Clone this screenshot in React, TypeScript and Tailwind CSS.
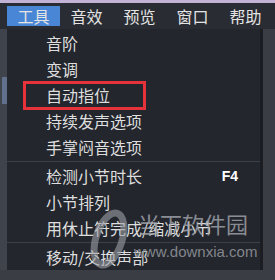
const menus = ["工具", "音效", "预览", "窗口", "帮助"];

type Item = { label: string; key?: string } | "sep";

const items: Item[] = [
  { label: "音阶" },
  { label: "变调" },
  { label: "自动指位" },
  { label: "持续发声选项" },
  { label: "手掌闷音选项" },
  "sep",
  { label: "检测小节时长", key: "F4" },
  { label: "小节排列" },
  { label: "用休止符完成/缩减小节" },
  "sep",
  { label: "移动/交换声部" },
];

export default function App() {
  return (
    <div
      className="relative w-[275px] h-[280px] overflow-hidden bg-[#3a3d44] flex flex-col"
      style={{ fontFamily: '"Noto Sans CJK SC", "Noto Sans", sans-serif' }}
    >
      <div className="h-[3px] bg-[#c2b3d6]" />
      {/* menu bar */}
      <div className="h-[26px] bg-[#292c33] flex items-center pl-[7px]">
        {menus.map((m, i) => (
          <div
            key={m}
            className={
              "w-[53px] h-[20px] flex items-center justify-center text-[16px] leading-none text-[#e4e4e4] " +
              (i === 0 ? "bg-[#4a86d6]" : "")
            }
          >
            {m}
          </div>
        ))}
      </div>

      <div className="flex h-[241px]">
        {/* left strip */}
        <div className="w-[7px] bg-[#3f434b] flex flex-col">
          <div className="h-[48px]" />
          <div className="h-[27px] ml-[2px] bg-[#5f6f8c]" />
        </div>
        {/* dropdown */}
        <div className="w-[256px] bg-[#23262d] border-r-[3px] border-[#1b1d22] pt-[1px] flex flex-col">
          {items.map((it, i) =>
            it === "sep" ? (
              <div key={i} className="h-[1px] bg-[#3c4048] my-[1px]" />
            ) : (
              <div
                key={i}
                className="relative h-[26px] flex items-center pl-[39px] pr-[22px] text-[16px] leading-none text-[#dedede]"
              >
                <span className="flex-1 whitespace-nowrap">{it.label}</span>
                {it.key && (
                  <span
                    className="text-[14px] font-bold text-white"
                    style={{ fontFamily: '"Liberation Sans", Arial, sans-serif' }}
                  >
                    {it.key}
                  </span>
                )}
                {it.label === "自动指位" && (
                  <div className="absolute left-[16px] top-[-1px] w-[123px] h-[29px] border-[3px] border-[#e5323b]" />
                )}
              </div>
            )
          )}
        </div>
        <div className="flex-1 bg-[#3a3d44]" />
      </div>

      {/* watermark */}
      <svg
        className="absolute left-[88px] top-[206px] opacity-60"
        width="42"
        height="66"
        viewBox="0 0 42 66"
      >
        <ellipse
          cx="21"
          cy="33"
          rx="13"
          ry="27"
          transform="rotate(18 21 33)"
          fill="none"
          stroke="#9ea2a8"
          strokeWidth="7"
        />
      </svg>
      <div className="absolute left-[138px] top-[212px] text-[22px] leading-none text-[#a4a7ad] opacity-80">
        当下软件园
      </div>
      <div
        className="absolute left-[134px] top-[244px] text-[15px] leading-none text-[#8e9197] opacity-90"
        style={{ fontFamily: '"Liberation Sans", Arial, sans-serif' }}
      >
        www.downxia.com
      </div>
    </div>
  );
}
